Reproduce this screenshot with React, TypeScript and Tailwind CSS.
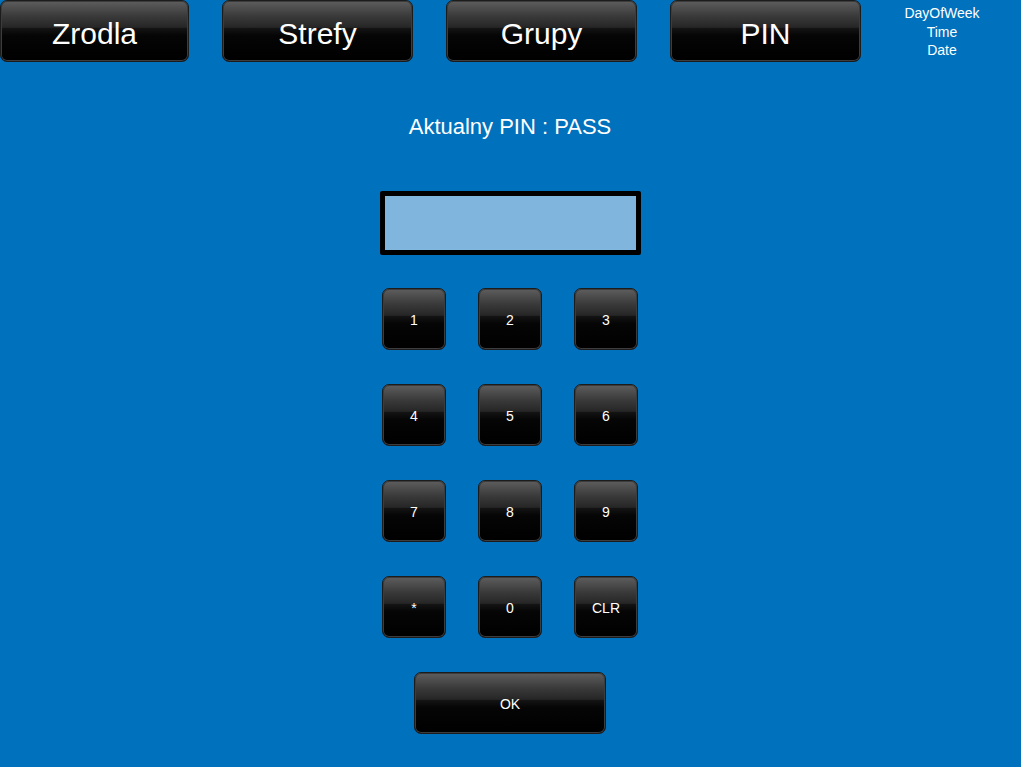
const btn =
  "flex items-center justify-center rounded-[7px] border border-[#1c1c1c] text-white shadow-[inset_0_0_0_1px_#3c3c3c] bg-[linear-gradient(to_bottom,#5e5e5e_0%,#3a3a3a_25%,#262626_44%,#141414_45%,#050505_58%,#000000_100%)]"

function TopButton({ label, width }: { label: string; width: string }) {
  return (
    <button className={`${btn} ${width} h-[62px] text-[30px]`}>
      <span className="pt-[4px]">{label}</span>
    </button>
  )
}

export default function App() {
  const keys = ["1", "2", "3", "4", "5", "6", "7", "8", "9", "*", "0", "CLR"]

  return (
    <div
      className="w-[1021px] h-[767px] pr-[1px] bg-[#0071bc] flex flex-col items-center overflow-hidden"
      style={{ fontFamily: '"Liberation Sans", Arial, sans-serif' }}
    >
      {/* Top navigation */}
      <div className="w-full h-[62px] flex items-start">
        <TopButton label="Zrodla" width="w-[189px]" />
        <div className="ml-[33px]">
          <TopButton label="Strefy" width="w-[191px]" />
        </div>
        <div className="ml-[33px]">
          <TopButton label="Grupy" width="w-[191px]" />
        </div>
        <div className="ml-[33px]">
          <TopButton label="PIN" width="w-[191px]" />
        </div>
        <div className="flex-1 flex flex-col items-center pt-[4px] pl-[3px] text-white text-[14px] leading-[18.5px]">
          <span>DayOfWeek</span>
          <span>Time</span>
          <span>Date</span>
        </div>
      </div>

      {/* Title */}
      <div className="mt-[52px] h-[26px] leading-[26px] text-white text-[22px]">
        Aktualny PIN : PASS
      </div>

      {/* PIN display */}
      <div className="mt-[51px] w-[261px] h-[64px] border-[5px] border-black rounded-[2px] bg-[#80b6dd]" />

      {/* Keypad */}
      <div className="mt-[33px] grid grid-cols-3 gap-x-[32px] gap-y-[34px]">
        {keys.map((k) => (
          <button key={k} className={`${btn} w-[64px] h-[62px] text-[14px]`}>
            <span className="pt-[2px]">{k}</span>
          </button>
        ))}
      </div>

      <button className={`${btn} mt-[34px] w-[192px] h-[62px] text-[14px]`}>
        <span className="pt-[2px]">OK</span>
      </button>
    </div>
  )
}
